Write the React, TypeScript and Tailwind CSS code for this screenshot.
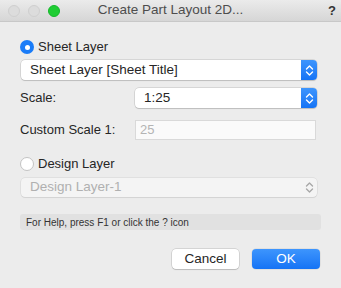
import React from "react";

function Updown({ color = "white" }: { color?: string }) {
  return (
    <svg width="9" height="13" viewBox="0 0 9 13" fill="none">
      <path d="M1.5 5 L4.5 2 L7.5 5" stroke={color} strokeWidth="1.4" strokeLinecap="round" strokeLinejoin="round" />
      <path d="M1.5 8 L4.5 11 L7.5 8" stroke={color} strokeWidth="1.4" strokeLinecap="round" strokeLinejoin="round" />
    </svg>
  );
}

function Popup({ label, className }: { label: string; className?: string }) {
  return (
    <div
      className={`flex h-[20px] items-stretch rounded-[4px] bg-white shadow-[0_0_0_0.5px_rgba(0,0,0,0.18),0_1px_1px_rgba(0,0,0,0.12)] ${className ?? ""}`}
    >
      <div className="flex flex-1 items-center pl-[9px] text-[13.5px] text-[#262626]">{label}</div>
      <div className="flex w-[16px] items-center justify-center rounded-r-[4px] bg-gradient-to-b from-[#3d95fd] to-[#1473f5]">
        <Updown />
      </div>
    </div>
  );
}

function App() {
  return (
    <div
      className="h-[288px] w-[341px] overflow-hidden bg-[#ececec] text-[#262626]"
      style={{ fontFamily: '"Liberation Sans", Arial, sans-serif' }}
    >
      {/* title bar */}
      <div className="relative flex h-[22px] items-center border-b border-[#c8c8c8] bg-gradient-to-b from-[#ebebeb] to-[#d6d6d6]">
        <div className="flex items-center gap-[8px] pl-[8px]">
          <span className="h-[12px] w-[12px] rounded-full border border-[#cfcfcf] bg-[#dcdcdc]" />
          <span className="h-[12px] w-[12px] rounded-full border border-[#cfcfcf] bg-[#dcdcdc]" />
          <span className="h-[12px] w-[12px] rounded-full border border-[#14b82a] bg-[#1fcd33]" />
        </div>
        <div className="absolute inset-0 flex items-center justify-center text-[13.5px] text-[#4d4d4d]">
          Create Part Layout 2D...
        </div>
        <div className="ml-auto pr-[5px] text-[13px] font-bold text-[#333]">?</div>
      </div>

      <div className="px-[20px]">
        {/* sheet layer radio */}
        <div className="mt-[17px] flex h-[16px] items-center">
          <span className="flex h-[14px] w-[14px] items-center justify-center rounded-full bg-[#1a7cf8]">
            <span className="h-[5px] w-[5px] rounded-full bg-white" />
          </span>
          <span className="ml-[4px] text-[13px]">Sheet Layer</span>
        </div>

        <Popup label="Sheet Layer [Sheet Title]" className="ml-[1px] mt-[5px] w-[296px]" />

        <div className="mt-[8px] flex items-center">
          <span className="w-[115px] text-[13px]">Scale:</span>
          <Popup label="1:25" className="w-[182px]" />
        </div>

        <div className="mt-[12px] flex items-center">
          <span className="w-[115px] text-[13px]">Custom Scale 1:</span>
          <div className="flex h-[20px] w-[181px] items-center border border-[#d9d9d9] bg-[#fafafa] pl-[4px] text-[13px] text-[#b4b4b4]">
            25
          </div>
        </div>

        {/* design layer radio */}
        <div className="mt-[16px] flex h-[16px] items-center">
          <span className="h-[14px] w-[14px] rounded-full border border-[#c3c3c3] bg-white" />
          <span className="ml-[4px] text-[13px]">Design Layer</span>
        </div>

        <div className="ml-[1px] mt-[6px] flex h-[19px] w-[296px] items-center rounded-[4px] bg-[#f4f4f4] shadow-[0_0_0_0.5px_rgba(0,0,0,0.1),0_1px_1px_rgba(0,0,0,0.06)]">
          <div className="flex-1 pl-[9px] text-[13.5px] text-[#b0b0b0]">Design Layer-1</div>
          <div className="flex w-[16px] items-center justify-center">
            <Updown color="#a8a8a8" />
          </div>
        </div>

        <div className="mt-[17px] flex h-[16px] w-[301px] items-center rounded-[3px] bg-[#e1e1e1] pl-[6px] text-[10px] text-[#333]">
          For Help, press F1 or click the ? icon
        </div>

        <div className="mt-[19px] flex justify-end gap-[13px] pr-[1px]">
          <button
            type="button"
            className="h-[20px] w-[67px] rounded-[4px] bg-white text-[13.5px] text-[#262626] shadow-[0_0_0_0.5px_rgba(0,0,0,0.2),0_1px_1px_rgba(0,0,0,0.12)]"
          >
            Cancel
          </button>
          <button
            type="button"
            className="h-[20px] w-[68px] rounded-[4px] bg-gradient-to-b from-[#3d95fd] to-[#1473f5] text-[13.5px] text-white shadow-[0_0_0_0.5px_rgba(0,0,0,0.1)]"
          >
            OK
          </button>
        </div>
      </div>
    </div>
  );
}

export default App;
